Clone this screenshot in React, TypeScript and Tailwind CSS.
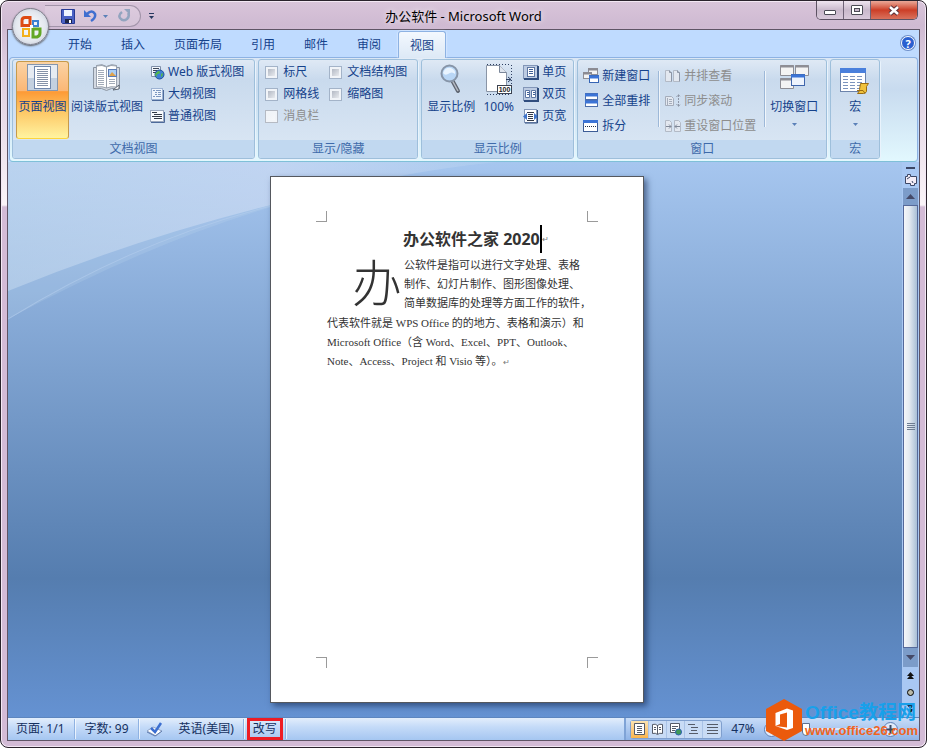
import React from "react";

type IconProps = { className?: string };

const Svg = ({ w, h, children }: { w: number; h: number; children: React.ReactNode }) => (
  <svg width={w} height={h} viewBox={`0 0 ${w} ${h}`} fill="none" className="block shrink-0" aria-hidden="true">
    {children}
  </svg>
);

/* ---------- ribbon icons ---------- */

const PrintLayoutIcon = () => (
  <Svg w={32} h={28}>
    <rect x="0.5" y="0.5" width="30" height="26" fill="#e6ebf2" stroke="#8596ad" />
    <rect x="1" y="14" width="29" height="12" fill="#c3d0e0" />
    <rect x="7.5" y="2.5" width="16" height="22" fill="#fff" stroke="#6f86ab" />
    <path d="M10 5.5h11M10 7.5h11M10 9.5h11M10 11.5h11M10 13.5h11M10 15.5h11M10 17.5h11M10 19.5h11M10 21.5h11" stroke="#8592a8" />
  </Svg>
);

const ReadingIcon = () => (
  <Svg w={30} h={28}>
    <path d="M1.5 3.5h3v-2q6-2 10 1q5-3 10-1v2h3v21h-8l-5 2l-5-2h-8z" fill="#d3d9e2" stroke="#8a94a2" />
    <path d="M4.5 2q6-1.500 10 1v21q-4-2-10-1zM24.5 2q-6-1.500-10 1v21q4-2 10-1z" fill="#fff" stroke="#9aa2ae" />
    <path d="M6 6.500h6M6 8.500h6M6 10.500h6M6 12.500h6M6 14.500h6M6 16.500h6M6 18.500h6M6 20.500h6M17 15.500h6M17 17.500h6M17 19.500h6" stroke="#a2abb8" />
    <rect x="16.5" y="5.5" width="8" height="7" fill="#a9cdf5" stroke="#5a7bb5" />
    <path d="M17 12l3-4l4 4z" fill="#e0a24a" />
    <path d="M21 26l6-5v4z" fill="#fff" stroke="#5d6673" />
  </Svg>
);

const WebLayoutIcon = () => (
  <Svg w={15} h={15}>
    <path d="M1.5 1.5h9v10h-9z" fill="#f4f8fd" stroke="#7f8fa8" />
    <path d="M3 3.500h6M3 5.500h4M3 7.500h3" stroke="#3c4658" />
    <circle cx="9.5" cy="9.5" r="4.500" fill="#3f7fd6" stroke="#1f4f9a" />
    <path d="M7 7q2-2 3 0q0 2-2 2t-1 3q-2-1-2-3zM11 9l2-1q0 3-2 4z" fill="#54b948" />
  </Svg>
);

const OutlineIcon = () => (
  <Svg w={15} h={15}>
    <rect x="1.5" y="1.5" width="11" height="11" fill="#eef4fc" stroke="#9db3d3" />
    <path d="M3 3.500h2M6 3.500h5M5 5.500h2M8 5.500h3M5 7.500h2M8 7.500h3M3 9.500h2M6 9.500h5" stroke="#7d97c0" />
    <path d="M2 13.5h11.500V3" stroke="#4d6a9b" />
  </Svg>
);

const DraftIcon = () => (
  <Svg w={15} h={15}>
    <rect x="0.5" y="1.5" width="13" height="11" fill="#f8fafd" stroke="#9aa8bf" />
    <path d="M2 3.500h5M4 5.500h8M2 7.500h10M4 9.500h8" stroke="#333a48" />
    <path d="M1 13.5h13.500V3" stroke="#4d6a9b" />
  </Svg>
);

const ZoomIcon = () => (
  <Svg w={24} h={30}>
    <path d="M13 16l6 11" stroke="#5f6671" strokeWidth="4" strokeLinecap="round" />
    <path d="M13 16l6 11" stroke="#b7bcc5" strokeWidth="1.5" />
    <circle cx="10.5" cy="9.5" r="8" fill="#b9d6f5" stroke="#8795a8" strokeWidth="2" />
    <path d="M4 9q2-6 8-5q5 2 4 6q-3-3-7 0q-3 2-5-1z" fill="#e9f4ff" />
  </Svg>
);

const HundredIcon = () => (
  <Svg w={26} h={31}>
    <path d="M1 .5h24M25.5 1v29M1 30.5h24" stroke="#2c3e60" strokeDasharray="1 2" />
    <path d="M.5 1.500h13l7 7v19h-20z" fill="#fff" stroke="#8a95a6" />
    <path d="M13.5 1.500v7h7" fill="#dfe5ee" stroke="#7a8699" />
    <path d="M20 15.500h5M22 13l3 2.500l-3 2.500" stroke="#2c3e60" />
    <rect x="11.5" y="21.500" width="14" height="8" fill="#fff" stroke="#3b4250" />
    <text x="18.5" y="28" textAnchor="middle" fontSize="7" fontFamily="Liberation Sans, sans-serif" fontWeight="700" fill="#222">100</text>
  </Svg>
);

const OnePageIcon = () => (
  <Svg w={16} h={15}>
    <rect x="0.5" y="0.5" width="14" height="13" fill="#bccbe2" stroke="#8296b8" />
    <rect x="4.5" y="2.5" width="7" height="9" fill="#fff" stroke="#5d77a3" />
    <path d="M6 4.500h4M6 6.500h4M6 8.500h4" stroke="#3f5f97" />
    <path d="M1 14h14V1" stroke="#2f4d7e" strokeWidth="2" />
  </Svg>
);

const TwoPagesIcon = () => (
  <Svg w={16} h={15}>
    <rect x="0.5" y="0.5" width="14" height="13" fill="#bccbe2" stroke="#8296b8" />
    <path d="M2.5 3.500h4v7h-4zM8.5 3.500h4v7h-4z" fill="#fff" stroke="#5d77a3" />
    <path d="M4 5.500h2M4 7.500h2M10 5.500h2M10 7.500h2" stroke="#3f5f97" />
    <path d="M1 14h14V1" stroke="#2f4d7e" strokeWidth="2" />
  </Svg>
);

const PageWidthIcon = () => (
  <Svg w={16} h={15}>
    <rect x="1.5" y="0.5" width="12" height="13" fill="#fff" stroke="#8296b8" />
    <path d="M4 3.500h7M5 5.500h5M5 7.500h5M5 9.500h5M4 11.500h7" stroke="#333a48" />
    <path d="M0 7.500l4-3.500v7zM15 7.500l-4-3.500v7z" fill="#3f74c9" />
    <path d="M2 14h12.500V1" stroke="#2f4d7e" />
  </Svg>
);

const NewWindowIcon = () => (
  <Svg w={16} h={15}>
    <rect x="5.5" y="0.5" width="9" height="6" fill="#f3f3f3" stroke="#8f8f96" />
    <path d="M5 1.500h10" stroke="#8a8a92" strokeWidth="2" />
    <rect x="0.5" y="4.5" width="8" height="6" fill="#f3f3f3" stroke="#8f8f96" />
    <path d="M0 5.500h9" stroke="#8a8a92" strokeWidth="2" />
    <rect x="6.5" y="7.5" width="9" height="7" fill="#fff" stroke="#3564b4" />
    <path d="M6 9h10" stroke="#3c74d6" strokeWidth="3" />
  </Svg>
);

const ArrangeIcon = () => (
  <Svg w={15} h={15}>
    <rect x="1.5" y="0.5" width="12" height="6" fill="#fff" stroke="#4b6dab" />
    <path d="M1 2h13" stroke="#3c74d6" strokeWidth="3" />
    <rect x="1.5" y="7.5" width="12" height="6" fill="#fff" stroke="#4b6dab" />
    <path d="M1 9h13" stroke="#3c74d6" strokeWidth="3" />
  </Svg>
);

const SplitIcon = () => (
  <Svg w={16} h={14}>
    <rect x="0.5" y="1.5" width="14" height="11" fill="#fff" stroke="#3d5c96" />
    <path d="M0 2.500h15" stroke="#3c74d6" strokeWidth="3" />
    <path d="M2 7.500h11" stroke="#222c44" strokeDasharray="1 1" />
  </Svg>
);

const SideBySideIcon = () => (
  <Svg w={16} h={14}>
    <path d="M.5 1.500h4l2 2v9h-6zM8.5 1.500h4l2 2v9h-6z" fill="#e3e8f0" stroke="#b3bac6" />
    <path d="M4.5 1.500v2h2v9M12.5 1.500v2h2v9" stroke="#8d96a6" />
  </Svg>
);

const SyncScrollIcon = () => (
  <Svg w={16} h={15}>
    <path d="M.5 3.500h6l2 2v7h-8z" fill="#e3e8f0" stroke="#a5adbb" />
    <path d="M2.5 5v7M4 6.500h3M4 8.500h3M4 10.500h3" stroke="#a5adbb" />
    <path d="M13.5 2v11M11.5 4l2-2.500l2 2.500M11.5 11l2 2.500l2-2.500" stroke="#8d96a6" strokeDasharray="2 1" />
  </Svg>
);

const ResetPosIcon = () => (
  <Svg w={16} h={14}>
    <path d="M.5 1.500h4l2 2v9h-6zM9.5 1.500h4l2 2v9h-6z" fill="#e3e8f0" stroke="#b3bac6" />
    <path d="M1 7.500h5M4 5.500l2 2l-2 2M15 7.500h-5M12 5.500l-2 2l2 2" stroke="#7f8898" />
  </Svg>
);

const SwitchIcon = () => (
  <Svg w={31} h={28}>
    <path d="M1.5 1.500h13v10h-13zM16.5 1.500h13v10h-13zM1.5 14.500h13v10h-13z" fill="#f4f4f4" stroke="#8e8e95" />
    <path d="M1 2.500h14M16 2.500h14M1 15.500h14" stroke="#8e8e95" strokeWidth="2" />
    <rect x="12.5" y="10.500" width="13" height="11" fill="#eef4fd" stroke="#3f66ac" />
    <path d="M12 12h14" stroke="#3c74d6" strokeWidth="3" />
  </Svg>
);

const MacroIcon = () => (
  <Svg w={30} h={27}>
    <rect x="0.5" y="0.5" width="25" height="23" fill="#fff" stroke="#6c83ab" />
    <path d="M0 2.500h26" stroke="#4a80dc" strokeWidth="5" />
    <path d="M3 8.500h20M3 11.500h20M3 14.500h20M3 17.500h20M3 20.500h20" stroke="#7c94bd" strokeDasharray="5 2" />
    <path d="M20.5 15.500h8l-2 3v5q-1 2-3 2h-6q2-2 2-4z" fill="#f0c23c" stroke="#9a6c12" />
    <path d="M17 22.500h6l2 3" stroke="#9a6c12" />
  </Svg>
);

/* ---------- title bar icons ---------- */

const OfficeLogo = () => (
  <Svg w={22} h={24}>
    <path d="M5 2.500h5v8h-8v-5q0-3 3-3z" stroke="#dd4b14" strokeWidth="3" />
    <path d="M13 6h5v5h-5z" stroke="#3c82d2" strokeWidth="2" />
    <path d="M3 14h6v7h-6z" stroke="#f3b01b" strokeWidth="2" />
    <path d="M13 14h7v4q0 3-3 4h-4z" stroke="#63a725" strokeWidth="3" />
    <path d="M10 10h3v3h-3z" fill="#fff" />
  </Svg>
);

const SaveIcon = () => (
  <Svg w={15} h={15}>
    <path d="M.5 .5h13v14h-12l-1-1z" fill="#4a61c4" stroke="#273a94" />
    <rect x="3" y="1" width="8" height="6" fill="#eef4ff" />
    <rect x="4" y="10" width="7" height="4" fill="#1d2547" />
    <rect x="8" y="11" width="2" height="3" fill="#fff" />
  </Svg>
);

const UndoIcon = () => (
  <Svg w={13} h={14}>
    <path d="M3 5q5-5 8 0q1 4-4 7" stroke="#3f6fd0" strokeWidth="2.5" />
    <path d="M0 1v7h7z" fill="#3f6fd0" />
  </Svg>
);

const RedoIcon = () => (
  <Svg w={13} h={14}>
    <path d="M4 3q-4 3-2 6q3 4 7 1q3-3 1-6" stroke="#93a4bf" strokeWidth="2.5" />
    <path d="M6 0h6v6z" fill="#93a4bf" />
  </Svg>
);

const Caret = ({ className = "text-[#5a80b8]" }: IconProps) => (
  <svg width="5" height="3" viewBox="0 0 5 3" className={`block shrink-0 ${className}`} aria-hidden="true">
    <path d="M0 0h5L2.500 3z" fill="currentColor" />
  </svg>
);

/* ---------- ribbon parts ---------- */

function Group({ title, children, className = "" }: { title: string; children: React.ReactNode; className?: string }) {
  return (
    <section
      aria-label={title}
      className="flex shrink-0 flex-col overflow-hidden rounded-[3px] border border-[#9ebfdb] bg-linear-to-b from-[#dfe9f5] via-[#c9daed] via-20% to-[#dce8f5] shadow-[1px_1px_0_#e9f3fc]"
    >
      <div className={`flex h-20 ${className}`}>{children}</div>
      <h2 className="h-[18px] bg-[#c1d8f0] text-center text-xs leading-[18px] text-[#3e6aaa]">{title}</h2>
    </section>
  );
}

function SmallButton({ icon, label, disabled = false, tall = false }: { icon: React.ReactNode; label: string; disabled?: boolean; tall?: boolean }) {
  return (
    <button
      disabled={disabled}
      className={`flex items-center gap-[3px] text-xs whitespace-nowrap ${tall ? "h-[25px]" : "h-[22px]"} ${disabled ? "text-[#8d8d8d]" : "text-[#15428b]"}`}
    >
      <span className="flex w-4 justify-center">{icon}</span>
      {label}
    </button>
  );
}

function LargeButton({ icon, label, caret = false, active = false, className = "" }: { icon: React.ReactNode; label: string; caret?: boolean; active?: boolean; className?: string }) {
  const look = active
    ? "rounded-[3px] border border-[#c79a4a] border-b-[#fdd53c] bg-[linear-gradient(to_bottom,#fbd3a4,#fbb775_38%,#fd9a35_39%,#fdc765_65%,#fff3a0)]"
    : "border border-transparent";
  return (
    <button aria-pressed={active} className={`flex h-[78px] shrink-0 flex-col items-center pt-[2px] text-xs whitespace-nowrap text-[#15428b] ${look} ${className}`}>
      <span className="flex h-[34px] items-start justify-center">{icon}</span>
      <span className="leading-[18px]">{label}</span>
      {caret && <Caret className="mt-[7px] text-[#5a80b8]" />}
    </button>
  );
}

function Check({ label, disabled = false }: { label: string; disabled?: boolean }) {
  return (
    <label className={`flex h-[22px] items-center gap-[5px] text-xs whitespace-nowrap ${disabled ? "text-[#8d8d8d]" : "text-[#15428b]"}`}>
      <input
        type="checkbox"
        disabled={disabled}
        className="size-[13px] appearance-none border border-[#a3b3c8] bg-linear-to-br from-[#a4abb8] to-[#f8f9fb] shadow-[inset_0_0_0_2px_#f1f4f8] disabled:border-[#b5bac3] disabled:from-[#eef1f5]"
      />
      {label}
    </label>
  );
}

const Divider = () => <span className="mt-[10px] h-[56px] w-[2px] border-l border-[#9db8d8] bg-white/70" />;

/* ---------- window parts ---------- */

function TitleBar() {
  return (
    <header className="relative grid h-[28px] grid-cols-[1fr_auto_1fr] items-start">
      <div className="flex items-center pt-1">
        <button
          aria-label="Office 按钮"
          className="absolute top-[7px] left-[5px] z-10 flex size-[37px] items-center justify-center rounded-full border border-[#7f7f8c] bg-radial from-white via-[#e3e7ee] via-60% to-[#aeb5c5] shadow-[0_1px_2px_#555]"
        >
          <OfficeLogo />
        </button>
        <div className="ml-[38px] flex h-[22px] items-center rounded-r-full border border-l-0 border-[#a294a9] bg-white/15 pl-4 text-[#6f7ca3]">
          <button aria-label="保存"><SaveIcon /></button>
          <button aria-label="撤消" className="ml-2"><UndoIcon /></button>
          <button aria-label="撤消列表" className="ml-[6px]"><Caret /></button>
          <button aria-label="恢复" className="mr-[9px] ml-[10px]"><RedoIcon /></button>
        </div>
        <button aria-label="自定义快速访问工具栏" className="ml-2 flex flex-col items-center gap-[2px] text-[#26385f]">
          <span className="h-px w-[5px] bg-[#26385f]" />
          <Caret className="text-[#26385f]" />
        </button>
      </div>
      <h1 className="pt-[5px] text-[13px] leading-5 text-black [text-shadow:0_0_6px_#fff]">办公软件 - Microsoft Word</h1>
      <div className="mr-[2px] flex h-[19px] justify-self-end overflow-hidden rounded-b-[5px] border border-t-0 border-[#5d5263]">
        <button aria-label="最小化" className="flex w-[27px] items-center justify-center border-r border-[#6f6377] bg-linear-to-b from-[#efe5f0] via-[#c9b9cc] via-50% to-[#d8c9da]">
          <span className="mt-1 h-[5px] w-3 rounded-[1px] border border-[#4b4b55] bg-white" />
        </button>
        <button aria-label="还原" className="flex w-[27px] items-center justify-center border-r border-[#6f6377] bg-linear-to-b from-[#efe5f0] via-[#c9b9cc] via-50% to-[#d8c9da]">
          <span className="flex h-[10px] w-3 items-center justify-center rounded-[1px] border border-[#4b4b55] bg-white">
            <span className="h-1 w-[6px] border border-[#4b4b55] bg-[#c9b9cc]" />
          </span>
        </button>
        <button aria-label="关闭" className="flex w-[46px] items-center justify-center bg-linear-to-b from-[#e9a898] via-[#cc3d26] via-50% to-[#d9715c]">
          <Svg w={12} h={11}>
            <path d="M2 2l8 7M10 2l-8 7" stroke="#5a3038" strokeWidth="4.5" />
            <path d="M2 2l8 7M10 2l-8 7" stroke="#fff" strokeWidth="2.5" />
          </Svg>
        </button>
      </div>
    </header>
  );
}

function Tabs() {
  const tabs = ["开始", "插入", "页面布局", "引用", "邮件", "审阅", "视图"];
  return (
    <nav className="flex h-[27px] items-end gap-[5px] bg-[#bfdbff] pl-12">
      {tabs.map((t) => (
        <button
          key={t}
          className={
            t === "视图"
              ? "z-10 -mb-px h-[27px] rounded-t-[3px] border border-b-0 border-[#8db2e3] bg-linear-to-b from-[#f3f8fe] to-[#dde9f6] px-[11px] text-xs leading-[23px] text-[#15428b] shadow-[0_0_2px_#fff]"
              : "h-[26px] px-3 text-xs leading-[23px] text-[#15428b]"
          }
        >
          {t}
        </button>
      ))}
      <button aria-label="帮助" className="mr-1 mb-[7px] ml-auto flex size-[14px] items-center justify-center rounded-full border border-white bg-[#2a5fd0] text-[11px] leading-none font-bold text-white shadow-[0_0_0_1px_#6f8fc9]">
        ?
      </button>
    </nav>
  );
}

function Ribbon() {
  return (
    <div className="mx-px flex h-[105px] items-start gap-[3px] overflow-hidden rounded-[4px] border border-[#8db2e3] border-b-[#7fc0d8] bg-linear-to-b from-[#dbe7f5] via-[#c8dbef] via-30% to-[#e2f8fe] px-[2px] pt-px">
      <Group title="文档视图" className="pt-px pr-[10px] pl-[3px]">
        <LargeButton active icon={<PrintLayoutIcon />} label="页面视图" className="w-[53px]" />
        <LargeButton icon={<ReadingIcon />} label="阅读版式视图" className="w-[76px]" />
        <div className="ml-1 flex flex-col">
          <SmallButton icon={<WebLayoutIcon />} label="Web 版式视图" />
          <SmallButton icon={<OutlineIcon />} label="大纲视图" />
          <SmallButton icon={<DraftIcon />} label="普通视图" />
        </div>
      </Group>

      <Group title="显示/隐藏" className="gap-2 pt-px pr-[10px] pl-[6px]">
        <div className="flex w-[56px] flex-col">
          <Check label="标尺" />
          <Check label="网格线" />
          <Check label="消息栏" disabled />
        </div>
        <div className="flex flex-col">
          <Check label="文档结构图" />
          <Check label="缩略图" />
        </div>
      </Group>

      <Group title="显示比例" className="pt-px pr-[7px] pl-[2px]">
        <LargeButton icon={<ZoomIcon />} label="显示比例" className="w-[54px]" />
        <LargeButton icon={<HundredIcon />} label="100%" className="w-[41px]" />
        <div className="ml-1 flex flex-col">
          <SmallButton icon={<OnePageIcon />} label="单页" />
          <SmallButton icon={<TwoPagesIcon />} label="双页" />
          <SmallButton icon={<PageWidthIcon />} label="页宽" />
        </div>
      </Group>

      <Group title="窗口" className="pt-px pr-[4px] pl-[5px]">
        <div className="mr-2 flex flex-col pt-[2px]">
          <SmallButton tall icon={<NewWindowIcon />} label="新建窗口" />
          <SmallButton tall icon={<ArrangeIcon />} label="全部重排" />
          <SmallButton tall icon={<SplitIcon />} label="拆分" />
        </div>
        <Divider />
        <div className="mr-2 ml-[5px] flex flex-col pt-[2px]">
          <SmallButton tall disabled icon={<SideBySideIcon />} label="并排查看" />
          <SmallButton tall disabled icon={<SyncScrollIcon />} label="同步滚动" />
          <SmallButton tall disabled icon={<ResetPosIcon />} label="重设窗口位置" />
        </div>
        <Divider />
        <LargeButton icon={<SwitchIcon />} label="切换窗口" caret className="w-[56px]" />
      </Group>

      <Group title="宏" className="px-[3px] pt-px">
        <LargeButton icon={<span className="pt-1"><MacroIcon /></span>} label="宏" caret className="w-[42px]" />
      </Group>
    </div>
  );
}

function DocumentPage() {
  return (
    <article className="flex w-[374px] flex-col justify-between border border-[#55585e] bg-white px-[45px] pt-[34px] pb-[34px] text-[#333] shadow-[3px_3px_6px_rgba(20,40,80,0.6)]">
      <div>
        <div className="flex justify-between">
          <span className="size-[11px] border-r border-b border-[#9a9a9a]" />
          <span className="size-[11px] border-b border-l border-[#9a9a9a]" />
        </div>
        <div className="pl-[11px] font-['Liberation_Serif','Noto_Sans_CJK_SC',serif]">
          <h2 className="mt-[3px] flex h-7 items-center pl-[76px] font-['Noto_Sans','Noto_Sans_CJK_SC',sans-serif] text-base font-bold whitespace-nowrap">
            办公软件之家 2020
            <span className="h-7 w-[2px] bg-black" />
            <span className="text-[8px] font-normal text-[#777]">↵</span>
          </h2>
          <div className="mt-[3px] flex text-[11px] leading-[19px] whitespace-nowrap">
            <span className="h-[58px] w-[77px] pl-[25px] text-[50px] leading-[58px] font-light">办</span>
            <p>
              公软件是指可以进行文字处理、表格
              <br />
              制作、幻灯片制作、图形图像处理、
              <br />
              简单数据库的处理等方面工作的软件，
            </p>
          </div>
          <p className="text-[11px] leading-[19px] whitespace-nowrap">
            代表软件就是 WPS Office 的的地方、表格和演示）和
            <br />
            Microsoft Office（含 Word、Excel、PPT、Outlook、
            <br />
            Note、Access、Project 和 Visio 等）。<span className="text-[8px] text-[#777]">↵</span>
          </p>
        </div>
      </div>
      <div className="flex justify-between">
        <span className="size-[11px] border-t border-r border-[#9a9a9a]" />
        <span className="size-[11px] border-t border-l border-[#9a9a9a]" />
      </div>
    </article>
  );
}

function Backdrop() {
  return (
    <svg viewBox="0 0 894 555" preserveAspectRatio="none" className="absolute inset-0 size-full" aria-hidden="true">
      <defs>
        <linearGradient id="glow" x1="0" y1="0" x2="1" y2="0">
          <stop offset="0" stopColor="#c8dcf0" stopOpacity=".5" />
          <stop offset=".55" stopColor="#cfdcf4" stopOpacity=".6" />
          <stop offset="1" stopColor="#d3e0f6" stopOpacity="0" />
        </linearGradient>
      </defs>
      <path d="M0 157Q140 80 262 44Q380 10 480 0H0z" fill="#c5daf0" opacity=".2" />
      <path d="M0 129Q130 75 262 42Q380 10 480 0H0z" fill="url(#glow)" />
      <path d="M0 157Q130 76 262 43" stroke="#b4cdec" strokeOpacity=".6" fill="none" />
    </svg>
  );
}

function ScrollBar() {
  return (
    <aside aria-label="垂直滚动条" className="flex w-[17px] shrink-0 flex-col items-center bg-[#a9c8f3] pt-[5px]">
      <span className="h-[2px] w-[9px] bg-[#3c4766]" />
      <button aria-label="标尺" className="mt-[5px]">
        <Svg w={12} h={12}>
          <path d="M.5 2.500h2v-2h3v2h6v7h-2v2h-4v-2h-5z" fill="#f3ecf6" stroke="#3c4766" />
          <path d="M2 5l3-2M7 7l1 2" stroke="#3c4766" />
        </Svg>
      </button>
      <button aria-label="向上滚动" className="mt-[2px] flex h-[17px] w-[15px] items-center justify-center bg-[#7c9cc9]">
        <Svg w={9} h={5}><path d="M0 5l4.500-5L9 5z" fill="#454a68" /></Svg>
      </button>
      <div className="flex w-[15px] flex-1 flex-col items-center justify-center gap-px border border-[#55699a] bg-linear-to-r from-[#f4f6f9] via-[#e4eaf1] via-40% to-[#a9bfd6]">
        <span className="h-px w-2 bg-[#6e7d92]" />
        <span className="h-px w-2 bg-[#6e7d92]" />
        <span className="h-px w-2 bg-[#6e7d92]" />
        <span className="h-px w-2 bg-[#6e7d92]" />
      </div>
      <button aria-label="向下滚动" className="flex h-[19px] w-[15px] items-center justify-center bg-[#7c9cc9]">
        <Svg w={9} h={5}><path d="M0 0h9l-4.500 5z" fill="#454a68" /></Svg>
      </button>
      <div className="flex h-[50px] flex-col items-center justify-between pt-[5px] pb-1">
        <button aria-label="前一页"><Svg w={7} h={8}><path d="M0 4l3.500-4L7 4zM0 7l3.500-4L7 7z" fill="#111" /></Svg></button>
        <button aria-label="选择浏览对象" className="size-[7px] rounded-full border border-black bg-[#b9b9a8]" />
        <button aria-label="下一页"><Svg w={7} h={8}><path d="M0 0l3.500 4L7 0zM0 4l3.500 4L7 4z" fill="#111" /></Svg></button>
      </div>
    </aside>
  );
}

const StatusSep = () => <span className="h-5 w-[2px] border-l border-[#8fb2e2] bg-white/70" />;

function StatusBar() {
  const views = [
    <path key="a" d="M2.500 1.500h10v11h-10zM5 4.500h5M5 6.500h5M5 8.500h5M5 10.500h5" fill="#fff" />,
    <path key="b" d="M2.500 2.500q3-1 5 1q2-2 5-1v9q-3-1-5 1q-2-2-5-1zM7.500 3v9M4 5.500h2M4 7.500h2M9 5.500h2M9 7.500h2" fill="#fff" />,
    <g key="c"><path d="M2.500 1.500h9v9h-9zM4 4.500h6M4 6.500h4M4 8.500h3" fill="#fff" /><circle cx="10.5" cy="10" r="3" fill="#3f9a58" stroke="#2d5fb0" /></g>,
    <path key="d" d="M2 2.500h7M5 5.500h7M5 8.500h6M3 11.500h9" />,
    <path key="e" d="M2 2.500h11M2 5.500h11M2 8.500h11M2 11.500h11" />,
  ];
  const names = ["页面视图", "阅读版式视图", "Web 版式视图", "大纲视图", "普通视图"];
  return (
    <footer className="flex h-[23px] items-center border-t border-[#5d86bf] bg-linear-to-b from-[#e3eefc] via-[#c5dbf8] via-40% to-[#a5c6f1] text-xs whitespace-nowrap text-[#15305f]">
      <button className="pr-[9px] pl-2">页面: 1/1</button>
      <StatusSep />
      <button className="px-[9px]">字数: 99</button>
      <StatusSep />
      <button aria-label="校对" className="px-[6px]">
        <Svg w={18} h={15}>
          <path d="M1 9l6-4l9 4l-6 5z" fill="#fff" stroke="#8fa3c6" />
          <path d="M1 10l8 4l7-5" stroke="#5d7aae" />
          <path d="M5 6l4 4l6-9" stroke="#3c6fd0" strokeWidth="2.5" />
        </Svg>
      </button>
      <button className="px-[9px]">英语(美国)</button>
      <StatusSep />
      <button className="mx-[2px] h-[22px] border-[3px] border-[#ed1c24] px-[3px] leading-4">改写</button>
      <StatusSep />
      <div className="ml-auto flex h-full items-center border-l-2 border-[#7fa3d6] bg-linear-to-b from-[#c9ddf8] to-[#8fb3e6] pl-1">
        <div className="flex h-[19px] rounded-[3px] border border-[#7f9fce] bg-[#c8dbf5]">
          {views.map((v, i) => (
            <button
              key={names[i]}
              aria-label={names[i]}
              className={`flex w-[18px] items-center justify-center border-r border-[#a9c2e6] last:border-r-0 ${i === 0 ? "bg-linear-to-b from-[#fbe3b0] to-[#fbb54a]" : ""}`}
            >
              <svg width="15" height="14" viewBox="0 0 15 14" fill="none" stroke="#555b68" aria-hidden="true">{v}</svg>
            </button>
          ))}
        </div>
        <button className="w-[42px] text-center">47%</button>
        <button aria-label="缩小" className="flex size-[15px] items-center justify-center rounded-full border border-[#5d7fb4] bg-[#dfeafb]">
          <Svg w={9} h={9}><path d="M1 4.500h7" stroke="#3b4a66" strokeWidth="2" /></Svg>
        </button>
        <input
          type="range"
          aria-label="显示比例"
          min={0}
          max={100}
          defaultValue={22}
          className="mx-1 h-4 w-[96px] appearance-none bg-[linear-gradient(to_bottom,transparent_7px,#dfeafb_7px,#dfeafb_9px,transparent_9px)] [&::-webkit-slider-thumb]:h-[13px] [&::-webkit-slider-thumb]:w-[8px] [&::-webkit-slider-thumb]:appearance-none [&::-webkit-slider-thumb]:rounded-b-[4px] [&::-webkit-slider-thumb]:border [&::-webkit-slider-thumb]:border-[#5d6f8f] [&::-webkit-slider-thumb]:bg-white"
        />
        <button aria-label="放大" className="mr-[21px] flex size-[15px] items-center justify-center rounded-full border border-[#5d7fb4] bg-[#dfeafb]">
          <Svg w={9} h={9}><path d="M0 4.500h9M4.500 0v9" stroke="#3b4a66" strokeWidth="2" /></Svg>
        </button>
      </div>
    </footer>
  );
}

function Watermark() {
  return (
    <div className="absolute right-[8px] bottom-[6px] flex items-center gap-[3px] font-['Liberation_Sans','Noto_Sans_CJK_SC',sans-serif] font-bold whitespace-nowrap">
      <Svg w={36} h={42}>
        <path d="M18 0l18 10v22l-18 10L0 32V10z" fill="#eb5a0c" />
        <path d="M9.500 14L21 9.500L27 11.500V29L21 31L9.500 27L21 28.500V13.500L14 15.500V25L9.500 27z" fill="#fff" />
      </Svg>
      <div>
        <p className="h-[20px] text-[19px] leading-[20px] text-[#18a0ea]">Office教程网</p>
        <p className="text-[13px] leading-[15px] text-[#f0641e]">www.office26.com</p>
      </div>
    </div>
  );
}

export default function App() {
  return (
    <div className="relative flex min-h-screen flex-col rounded-lg border border-[#2a232c] bg-[linear-gradient(to_bottom,#d9c5da,#cfbad2_24px,#dccbde_60px,#faf4f8_204px,#d3bbd6_206px)] px-[6px] pb-[6px] font-['Noto_Sans','Noto_Sans_CJK_SC',sans-serif] shadow-[inset_0_0_0_1px_#f3e8f4]">
      <TitleBar />
      <div className="flex flex-1 flex-col border border-[#5f5566] bg-[#bfdbff]">
        <Tabs />
        <Ribbon />
        <main className="relative flex flex-1 bg-linear-to-b from-[#a6c6ef] via-[#557daf] via-75% to-[#6592d2]">
          <Backdrop />
          <div className="relative flex flex-1 justify-center pt-[14px] pb-[14px] pl-1">
            <DocumentPage />
          </div>
          <ScrollBar />
        </main>
        <StatusBar />
      </div>
      <Watermark />
    </div>
  );
}
